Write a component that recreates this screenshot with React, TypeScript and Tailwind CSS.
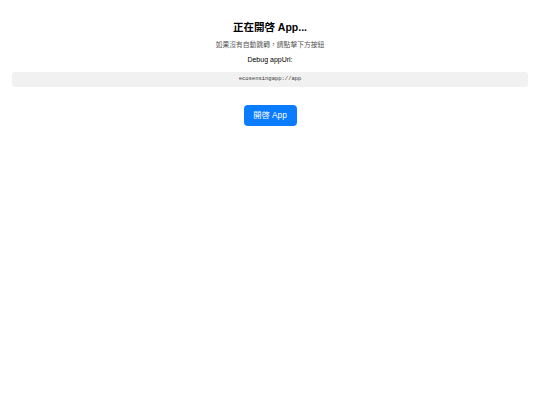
export default function App() {
  return (
    <div
      className="flex min-h-[405px] flex-col items-center bg-white px-3 pt-[19px] text-center"
      style={{ fontFamily: '"Liberation Sans", "Noto Sans CJK TC", sans-serif' }}
    >
      <h1 className="text-[10.5px] font-bold leading-[16px] text-black">正在開啓 App...</h1>
      <p className="mt-[5px] text-[6.8px] leading-[10px] text-[#555]">如果沒有自動跳轉，請點擊下方按鈕</p>
      <p className="mt-[4.5px] text-[7px] leading-[10px] text-black">Debug appUrl:</p>
      <div
        className="mt-[7px] w-full rounded-[3px] bg-[#f1f1f1] py-[3.5px] text-[5.5px] leading-[8.5px] text-[#333]"
        style={{ fontFamily: '"Liberation Mono", monospace' }}
      >
        ecosensingapp://app
      </div>
      <button className="mt-[17.5px] h-[21.5px] w-[53px] rounded-[4px] bg-[#0a7cff] text-[8.3px] text-white">
        開啓 App
      </button>
    </div>
  );
}
